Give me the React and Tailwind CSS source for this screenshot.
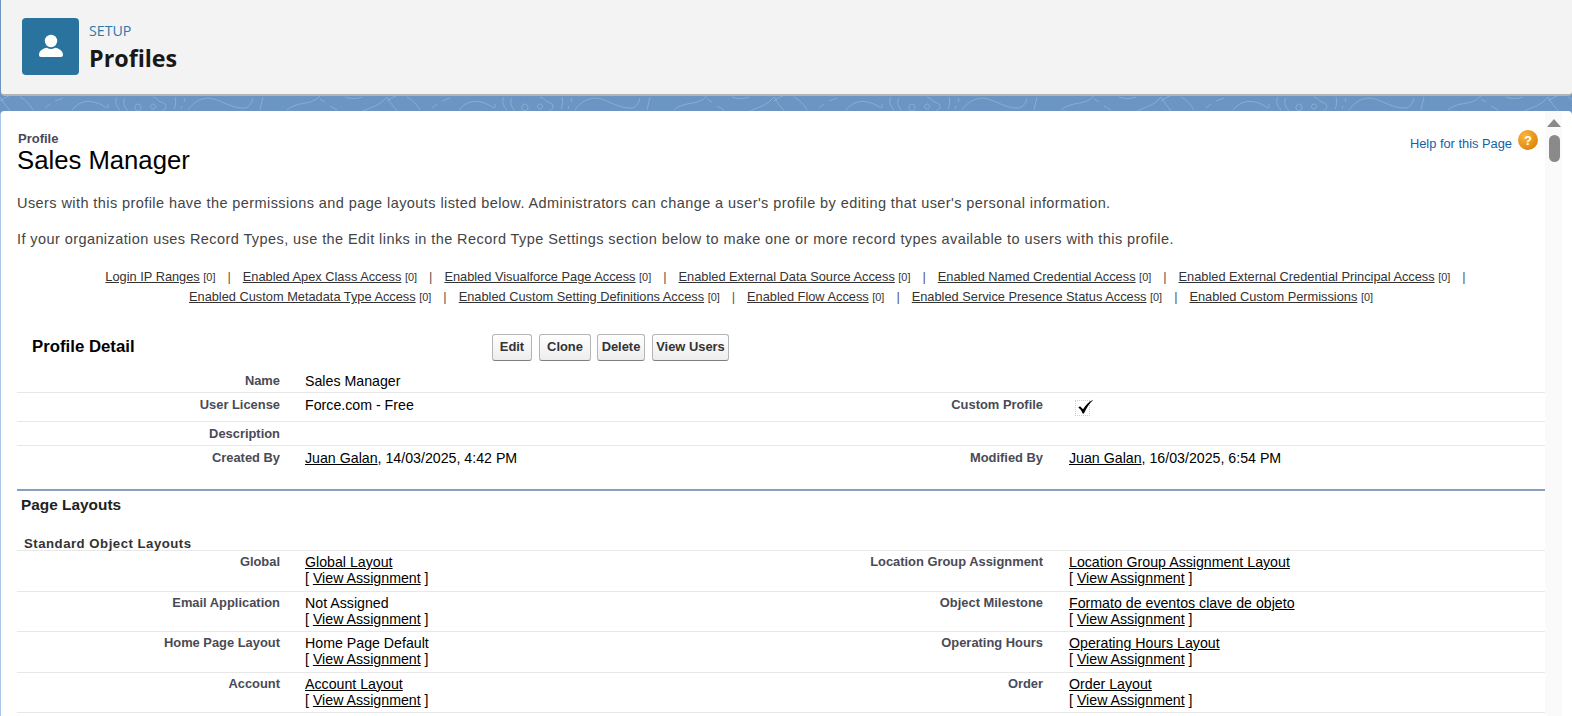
import React from "react";

const arial = "font-['Liberation_Sans',Arial,sans-serif]";

const topLinks = [
  ["Login IP Ranges", "Enabled Apex Class Access", "Enabled Visualforce Page Access", "Enabled External Data Source Access", "Enabled Named Credential Access", "Enabled External Credential Principal Access"],
  ["Enabled Custom Metadata Type Access", "Enabled Custom Setting Definitions Access", "Enabled Flow Access", "Enabled Service Presence Status Access", "Enabled Custom Permissions"],
];

const layouts = [
  ["Global", "Global Layout", true, "Location Group Assignment", "Location Group Assignment Layout"],
  ["Email Application", "Not Assigned", false, "Object Milestone", "Formato de eventos clave de objeto"],
  ["Home Page Layout", "Home Page Default", false, "Operating Hours", "Operating Hours Layout"],
  ["Account", "Account Layout", true, "Order", "Order Layout"],
];

// texture behind the header, one tile repeats every 387px
function Band() {
  return (
    <svg width="1572" height="15" className="block">
      <defs>
        <pattern id="band" width="387" height="15" patternUnits="userSpaceOnUse">
          <path
            fill="none"
            stroke="#ffffff"
            strokeOpacity="0.2"
            d="M0 5C3 3 6 1 9 0M20 1C26 4 30 9 33 14M45 12L50 8M55 5L63 2M72 14C80 4 92 2 107 12M108 8V12M117 1C114 6 117 11 120 14M125 2C122 6 125 12 128 15M138 8a3 3.5 0 1 1-0.1 0M153 13a2.5 2.5 0 1 1 0.1 0M153 1C160 3 158 7 162 6C164 9 166 6 166 12L162 15M175 1C176 5 176 9 174 13M185 2L184 6M182 10L181 13M188 14C194 5 204 0 214 3C224 6 234 13 245 12C250 11 252 6 253 2M263 1L260 14M287 14C296 6 306 9 315 4L320 0M320 3L325 6M330 10L337 14M345 1C350 3 357 3 362 1M363 15C372 11 380 9 385 3L387 1"
          />
          <path fill="none" stroke="#ffffff" strokeOpacity="0.2" d="M0 1C3 5 5 10 8 12L10 15" />
        </pattern>
      </defs>
      <rect width="1572" height="15" fill="url(#band)" />
    </svg>
  );
}

function ViewAssignment() {
  return (
    <div>
      [ <a className="underline">View Assignment</a> ]
    </div>
  );
}

function DetailRow({ label, value, label2, value2, className = "" }) {
  return (
    <div className={`grid grid-cols-[275px_488px_275px_1fr] border-b border-[#e8e8e8] ${className}`}>
      <div className="pr-3 text-right text-[12.9px] font-bold leading-[16px] text-[#4a4a56]">{label}</div>
      <div className="pl-[13px] text-[14.2px] leading-[16px] text-black">{value}</div>
      <div className="pr-3 text-right text-[12.9px] font-bold leading-[16px] text-[#4a4a56]">{label2}</div>
      <div className="pl-[14px] text-[14.2px] leading-[16px] text-black">{value2}</div>
    </div>
  );
}

function Btn({ children, className = "" }) {
  return (
    <button
      type="button"
      className={`h-[27px] rounded-[3px] border border-[#b5b5b5] border-b-[#7f7f7f] bg-gradient-to-b from-white to-[#ededed] text-[12.9px] font-bold text-[#333] ${className}`}
    >
      {children}
    </button>
  );
}

export default function App() {
  return (
    <div className={`h-[716px] w-[1572px] overflow-hidden bg-[#6b96c4] ${arial}`}>
      <header className="ml-px flex h-[96px] items-center gap-[10px] rounded-b-[4px] border-b-2 border-[#b4b4b4] bg-[#f3f3f3] pb-[2px] pl-[21px]">
        <div className="flex h-[57px] w-[57px] items-center justify-center rounded-[4px] bg-[#2a739e]">
          <svg width="26" height="26" viewBox="0 0 26 26" fill="#fff">
            <circle cx="13" cy="8" r="6.2" />
            <path d="M1 22c0-4.5 4-6.5 8-7.2 2.4 1.6 5.6 1.6 8 0 4 .7 8 2.7 8 7.2 0 1-.8 2-2 2H3c-1.2 0-2-1-2-2z" />
          </svg>
        </div>
        <div className="pt-[4px] font-['Open_Sans',sans-serif]">
          <div className="text-[14.2px] leading-[20px] text-[#2a78ad]">SETUP</div>
          <div className="text-[23.3px] font-bold leading-[34px] text-[#181818]">Profiles</div>
        </div>
      </header>
      <Band />
      <main className="flex h-[605px] rounded-t-[4px] border-l border-[#a9c5ec] bg-white">
        <div className="w-[1544px] shrink-0 pl-[16px]">
          <div className="flex justify-between pt-[20px]">
            <div>
              <div className="pl-px text-[13px] font-bold leading-[15px] text-[#4a4a56]">Profile</div>
              <h1 className="text-[25.7px] leading-[29px] text-black">Sales Manager</h1>
            </div>
            <div className="-mt-[1px] flex items-start gap-[6px] pr-[7px] text-[12.85px] text-[#0f62ab]">
              <a className="pt-[4px]">Help for this Page</a>
              <div className="flex h-[20px] w-[20px] items-center justify-center rounded-full bg-[radial-gradient(circle_at_35%_30%,#fbb53c,#e08a0c_70%,#b86c08)] text-[13px] font-bold leading-none text-white">?</div>
            </div>
          </div>
          <p className="mt-[18px] text-[14.5px] leading-[20px] tracking-[0.42px] text-[#444]">
            Users with this profile have the permissions and page layouts listed below. Administrators can change a user's profile by editing that user's personal information.
          </p>
          <p className="mt-[16px] text-[14.5px] leading-[20px] tracking-[0.42px] text-[#444]">
            If your organization uses Record Types, use the Edit links in the Record Type Settings section below to make one or more record types available to users with this profile.
          </p>
          <div className="mt-[18px] text-center text-[12.8px] leading-[20px] text-[#333]">
            {topLinks.map((line, i) => (
              <div key={i} className={`whitespace-nowrap ${i === 0 ? "pl-[21px]" : ""}`}>
                {line.map((name, j) => (
                  <span key={name}>
                    <a className="underline">{name}</a> <span className="text-[10.9px]">[0]</span>
                    {(i === 0 || j < line.length - 1) && <span className="mx-[12px] text-[#555]">|</span>}
                  </span>
                ))}
              </div>
            ))}
          </div>
          <div className="mb-[4px] mt-[22px] flex h-[36px] items-center">
            <h2 className="w-[475px] pl-[15px] text-[16.8px] font-bold text-black">Profile Detail</h2>
            <div className="flex gap-[7px]">
              <Btn className="w-[40px]">Edit</Btn>
              <Btn className="w-[52px]">Clone</Btn>
              <Btn className="-ml-px w-[48px]">Delete</Btn>
              <Btn className="w-[77px]">View Users</Btn>
            </div>
          </div>
          <DetailRow className="h-[24px] pt-[4px]" label="Name" value="Sales Manager" />
          <DetailRow
            className="h-[29px] pt-[4px]"
            label="User License"
            value="Force.com - Free"
            label2="Custom Profile"
            value2={
              <span className="relative ml-[6px] block h-[16px] w-[15px] translate-y-[3px] border border-dotted border-[#ccc]">
                <svg width="19" height="16" viewBox="0 0 22 18" className="absolute -top-[2px] left-px">
                  <path d="M1.5 9.5L3.5 8L7 11.5C10 6.5 14 2.5 19 0.5C14.5 4.5 11 10 8 16.5H6.5C5.5 13.5 3.8 11.2 1.5 9.5Z" fill="#000" />
                </svg>
              </span>
            }
          />
          <DetailRow className="h-[24px] pt-[4px]" label="Description" />
          <div className="grid h-[45px] grid-cols-[275px_488px_275px_1fr] border-b-2 border-[#8a9ebe] pt-[4px] text-[14.2px] leading-[16px] text-black">
            <div className="pr-3 text-right text-[12.9px] font-bold text-[#4a4a56]">Created By</div>
            <div className="pl-[13px]"><a className="underline">Juan Galan</a>, 14/03/2025, 4:42 PM</div>
            <div className="pr-3 text-right text-[12.9px] font-bold text-[#4a4a56]">Modified By</div>
            <div className="pl-[14px]"><a className="underline">Juan Galan</a>, 16/03/2025, 6:54 PM</div>
          </div>
          <h3 className="pl-[4px] pt-[4px] text-[15.4px] font-bold leading-[20px] text-[#222]">Page Layouts</h3>
          <h4 className="mt-[22px] border-b border-[#e8e8e8] pl-[7px] text-[13.2px] font-bold leading-[13px] tracking-[0.5px] text-[#333]">Standard Object Layouts</h4>
          {layouts.map(([a, b, link, c, d]) => (
            <DetailRow
              key={a}
              className="h-[40.5px] pt-[3px]"
              label={a}
              value={
                <>
                  <div>{link ? <a className="underline">{b}</a> : b}</div>
                  <ViewAssignment />
                </>
              }
              label2={c}
              value2={
                <>
                  <div><a className="underline">{d}</a></div>
                  <ViewAssignment />
                </>
              }
            />
          ))}
        </div>
        <div className="flex h-full w-[17px] shrink-0 flex-col items-center bg-[#fafafa] pl-px pt-[8px]">
          <div className="h-0 w-0 border-x-[7px] border-b-[8px] border-x-transparent border-b-[#8a8a8a]" />
          <div className="mt-[8px] h-[27px] w-[11px] rounded-full bg-[#8a8a8a]" />
        </div>
      </main>
    </div>
  );
}
